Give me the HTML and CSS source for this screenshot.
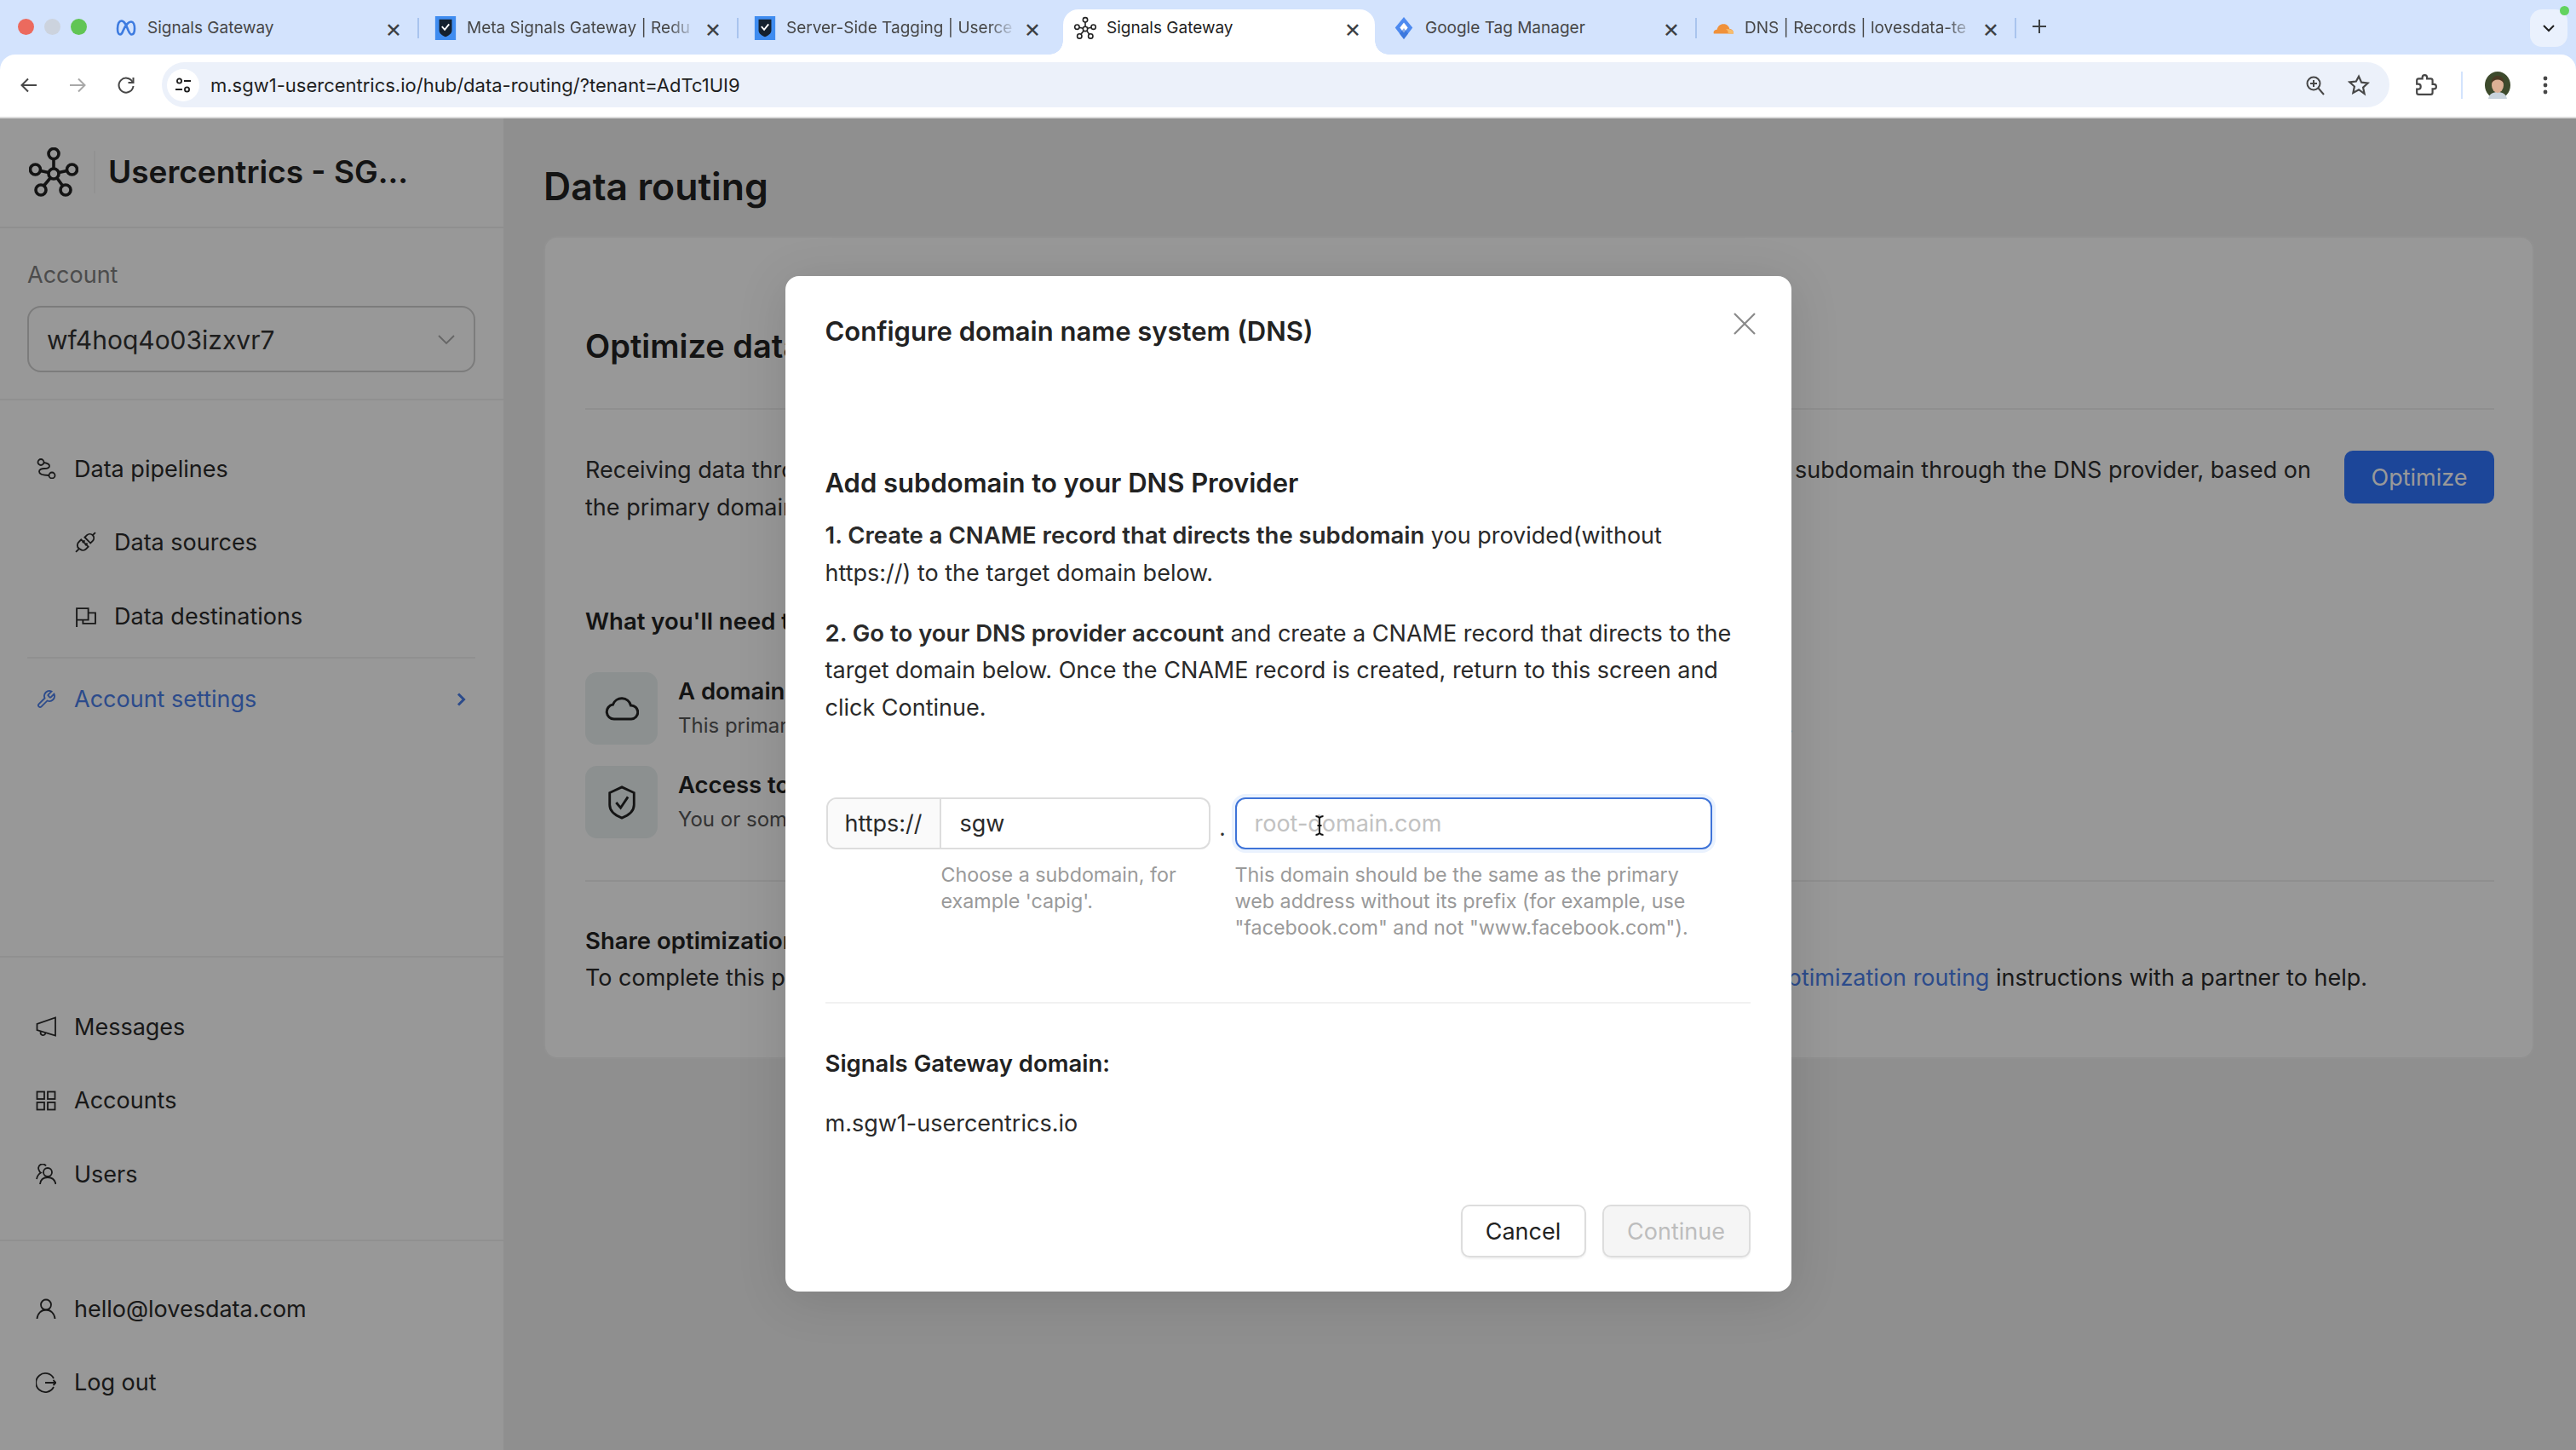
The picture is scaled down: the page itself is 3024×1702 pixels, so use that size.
FILE: index.html
```html
<!DOCTYPE html>
<html lang="en">
<head>
<meta charset="utf-8">
<title>Signals Gateway</title>
<link rel="stylesheet" href="styles.css">
</head>
<body>
<header class="chrome">
  <div class="tabstrip">
    <div class="lights"><i class="light red"></i><i class="light grey"></i><i class="light green"></i></div>
    <div class="tab">
      <svg class="fav" viewBox="0 0 26 26"><path d="M3 13.500C3 8 5 4.500 7.500 4.500c4 0 6 6 8 11 1.500 3.500 2.500 5 4 5 2 0 3.500-2.500 3.500-7s-1.500-8-4-8c-4 0-8 7-9.500 10.500C8.500 19 7.500 20.500 6 20.500c-2 0-3-3-3-7z" fill="none" stroke="#3d7be0" stroke-width="2.600"/></svg>
      <span class="tab-title">Signals Gateway</span><span class="tab-x">×</span>
    </div>
    <div class="tab">
      <svg class="fav" viewBox="0 0 26 30"><rect width="26" height="30" fill="#3f8cf0"/><path d="M5 4h16v14c0 4-4 6.500-8 8-4-1.500-8-4-8-8z" fill="#14202e"/><path d="M8.500 13l3.500 4 5.500-7" fill="none" stroke="#fff" stroke-width="2"/></svg>
      <span class="tab-title fade">Meta Signals Gateway | Redu</span><span class="tab-x">×</span>
    </div>
    <div class="tab">
      <svg class="fav" viewBox="0 0 26 30"><rect width="26" height="30" fill="#3f8cf0"/><path d="M5 4h16v14c0 4-4 6.500-8 8-4-1.500-8-4-8-8z" fill="#14202e"/><path d="M8.500 13l3.500 4 5.500-7" fill="none" stroke="#fff" stroke-width="2"/></svg>
      <span class="tab-title fade">Server-Side Tagging | Userce</span><span class="tab-x">×</span>
    </div>
    <div class="tab active">
      <svg class="fav" viewBox="0 0 58 58"><use href="#hub"/></svg>
      <span class="tab-title">Signals Gateway</span><span class="tab-x">×</span>
    </div>
    <div class="tab">
      <svg class="fav" viewBox="0 0 26 30"><path d="M13 1l11 13.500L13 29 2 14.500z" fill="#4d8af0"/><path d="M13 8l5 6.500-5 6.500-5-6.500z" fill="#fff"/><path d="M13 29l-5.500-7 5.500-7 5.500 7z" fill="#2f69d0" opacity=".55"/></svg>
      <span class="tab-title">Google Tag Manager</span><span class="tab-x">×</span>
    </div>
    <div class="tab">
      <svg class="fav" viewBox="0 0 28 18"><path d="M2 16c-1-3 1-5 4-5 1-5 5-8 10-7 3 .6 5 3 6 6 3 0 5 2 5 6z" fill="#f0913a"/><path d="M20 16c.5-3-1-5-3-6l6 .5c2 .5 4 2.500 4 5.500z" fill="#f8bd6b"/></svg>
      <span class="tab-title fade">DNS | Records | lovesdata-te</span><span class="tab-x">×</span>
    </div>
    <svg class="newtab" viewBox="0 0 18 18"><path d="M9 1v16M1 9h16" stroke="#3c4043" stroke-width="2"/></svg>
    <div class="tab-menu"><svg viewBox="0 0 16 10"><path d="M2 2l6 6 6-6" fill="none" stroke="#1f1f1f" stroke-width="2"/></svg></div>
    <i class="cam-dot"></i>
  </div>
  <div class="toolbar">
    <svg class="tb-icon" viewBox="0 0 24 24"><path d="M21 12H4M11 4.500L3.500 12l7.500 7.500" fill="none" stroke="#474747" stroke-width="2"/></svg>
    <svg class="tb-icon" viewBox="0 0 24 24"><path d="M3 12h17M13 4.500l7.500 7.500-7.500 7.500" fill="none" stroke="#a8a8a8" stroke-width="2"/></svg>
    <svg class="tb-icon" viewBox="0 0 24 24"><path d="M19.500 8A8.500 8.500 0 1 0 20.500 13" fill="none" stroke="#474747" stroke-width="2"/><path d="M20.500 3v6h-6" fill="none" stroke="#474747" stroke-width="2"/></svg>
    <div class="omnibox">
      <div class="site-info"><svg viewBox="0 0 20 20"><circle cx="5.500" cy="5" r="2.600" fill="none" stroke="#1f1f1f" stroke-width="1.800"/><path d="M11 5h8M1 15h8" stroke="#1f1f1f" stroke-width="1.800"/><circle cx="14.500" cy="15" r="2.600" fill="none" stroke="#1f1f1f" stroke-width="1.800"/></svg></div>
      <span class="url">m.sgw1-usercentrics.io/hub/data-routing/?tenant=AdTc1UI9</span>
      <svg class="omni-zoom" viewBox="0 0 24 24"><circle cx="10" cy="10" r="7.500" fill="none" stroke="#474747" stroke-width="2"/><path d="M15.500 15.500L22 23M10 6v8M6 10h8" stroke="#474747" stroke-width="2"/></svg>
      <svg class="omni-star" viewBox="0 0 24 24"><path d="M12 2.500l2.900 6.400 6.900.8-5.100 4.700 1.400 6.900L12 16.800l-6.100 3.500 1.400-6.900-5.100-4.700 6.900-.8z" fill="none" stroke="#474747" stroke-width="2"/></svg>
    </div>
    <svg class="tb-ext" viewBox="0 0 24 24"><path d="M20.500 11H19V7c0-1.100-.9-2-2-2h-4V3.500C13 2.120 11.880 1 10.500 1S8 2.120 8 3.500V5H4c-1.100 0-1.990.9-1.990 2v3.800H3.500c1.490 0 2.700 1.210 2.700 2.700s-1.210 2.700-2.700 2.700H2V20c0 1.100.9 2 2 2h13c1.100 0 2-.9 2-2v-4h1.500c1.380 0 2.500-1.120 2.500-2.500S21.880 11 20.500 11z" fill="none" stroke="#474747" stroke-width="2"/></svg>
    <i class="tb-sep"></i>
    <svg class="avatar" viewBox="0 0 32 32"><ellipse cx="16" cy="16" rx="15" ry="16" fill="#3d4a2c"/><path d="M5 32c1-6 6-8 11-8s10 2 11 8z" fill="#c9d3dc"/><ellipse cx="16" cy="16" rx="7" ry="9" fill="#dcb095"/><path d="M8.500 14c0-7 4-9 7.500-9s7.500 2 7.500 9c-2-3-4-4.500-7.500-4.500S10.500 11 8.500 14z" fill="#4c3a24"/></svg>
    <svg class="kebab" viewBox="0 0 6 24"><circle cx="3" cy="4" r="2.400" fill="#474747"/><circle cx="3" cy="12" r="2.400" fill="#474747"/><circle cx="3" cy="20" r="2.400" fill="#474747"/></svg>
  </div>
</header>

<svg class="sprite" aria-hidden="true"><defs>
  <g id="hub" fill="none" stroke="#222" stroke-width="3.600">
    <circle cx="29" cy="31" r="6"/><circle cx="29" cy="7.500" r="6"/><circle cx="7.500" cy="26" r="6"/><circle cx="50.500" cy="26" r="6"/><circle cx="14" cy="50" r="6"/><circle cx="43" cy="50" r="6"/>
    <path d="M29 13.500V25M13.500 27.500L23 29.500M44.500 27.500L35 29.500M17.500 45L25 36M39.500 45L33 36"/>
  </g>
</defs></svg>

<div class="app">
  <aside class="sidebar">
    <div class="brand">
      <svg class="brand-logo" viewBox="0 0 58 58"><use href="#hub"/></svg>
      <i class="brand-sep"></i>
      <span class="brand-name">Usercentrics - SG...</span>
    </div>
    <div class="account">
      <div class="account-label">Account</div>
      <div class="select"><span>wf4hoq4o03izxvr7</span><svg viewBox="0 0 20 12"><path d="M1 1l9 9 9-9" fill="none" stroke="#aaa" stroke-width="1.800"/></svg></div>
    </div>
    <nav class="nav-main">
      <a class="item"><svg class="ico" viewBox="0 0 24 24"><circle cx="6" cy="4.500" r="3.500"/><circle cx="19" cy="20" r="3.500"/><path d="M9.500 5c4 .5 6.500 1.500 6.500 4s-3 3-6 3c-3.500 0-6 1-6 3.500 0 3 3.500 4.500 11.500 4.500"/></svg>Data pipelines</a>
      <a class="item sub"><svg class="ico" viewBox="0 0 24 24"><path d="M1 23l3.500-3.500M23 1l-3.500 3.500M11 10l-2.500 2.500M14 13l-2.500 2.500"/><path d="M7 9l8 8-2.500 2.500a4.800 4.800 0 0 1-6.500.5L4.500 19a4.800 4.800 0 0 1 0-7.500z"/><path d="M11 6.500L13.500 4a4.800 4.800 0 0 1 6.500 0 4.800 4.800 0 0 1 0 6.500L17.500 13z"/></svg>Data sources</a>
      <a class="item sub"><svg class="ico" viewBox="0 0 24 24"><path d="M2 24V3h13v13H2M15 8h8v12H9v-4"/></svg>Data destinations</a>
      <hr class="rule">
      <a class="item current"><svg class="ico" viewBox="0 0 24 24"><path d="M14.700 6.300a1 1 0 0 0 0 1.400l1.600 1.600a1 1 0 0 0 1.400 0l3.770-3.770a6 6 0 0 1-7.940 7.940l-6.910 6.910a2.120 2.120 0 0 1-3-3l6.910-6.910a6 6 0 0 1 7.940-7.940l-3.760 3.760z"/></svg>Account settings<svg class="chev" viewBox="0 0 11 16"><path d="M2 1.500l6.500 6.500L2 14.500"/></svg></a>
    </nav>
    <nav class="nav-secondary">
      <a class="item"><svg class="ico" viewBox="0 0 24 24"><path d="M23 1.500v21L1.500 16V9zM6 17.500a3 3 0 1 0 5.500 1.800"/></svg>Messages</a>
      <a class="item"><svg class="ico" viewBox="0 0 24 24"><rect x="1.500" y="1.500" width="8.500" height="8.500"/><rect x="14" y="1.500" width="8.500" height="8.500"/><rect x="1.500" y="14" width="8.500" height="8.500"/><rect x="14" y="14" width="8.500" height="8.500"/></svg>Accounts</a>
      <a class="item"><svg class="ico" viewBox="0 0 24 24"><circle cx="14" cy="10" r="5"/><path d="M5 24c.5-5 4-8 9-8s8.500 3 9.500 8M12 2.500A5 5 0 0 0 5.500 1 5 5 0 0 0 3.500 7c.5 1.500 1.500 3 2.500 3.500C3.500 12 1.500 15 1 18"/></svg>Users</a>
    </nav>
    <nav class="nav-user">
      <a class="item"><svg class="ico" viewBox="0 0 24 24"><circle cx="12" cy="7.500" r="6"/><path d="M1.500 24c.5-6.500 5-10.500 10.500-10.500S22 17.500 22.500 24"/></svg>hello@lovesdata.com</a>
      <a class="item"><svg class="ico" viewBox="0 0 24 24"><path d="M21 7A11 11 0 1 0 21 17M11 12h13M20.500 9l3 3-3 3"/></svg>Log out</a>
    </nav>
  </aside>
  <main class="main">
    <h1 class="page-title">Data routing</h1>
    <section class="card">
      <h2 class="card-title">Optimize data</h2>
      <div class="card-intro">
        <div class="intro-text">
          <div class="split"><span>Receiving data through</span><span>subdomain through the DNS provider, based on</span></div>
          <div>the primary domain</div>
        </div>
        <div class="btn-primary">Optimize</div>
      </div>
      <h3 class="need">What you'll need to</h3>
      <div class="need-row">
        <div class="tile"><svg viewBox="0 0 40 30"><path d="M11 27a8.500 8.500 0 0 1-1.500-16.900A11 11 0 0 1 30.500 11 8 8 0 0 1 31 27z" fill="none" stroke="#222" stroke-width="3"/></svg></div>
        <div class="need-body"><div class="need-name">A domain</div><div class="need-sub split"><span>This primary domain</span><span>.</span></div></div>
      </div>
      <div class="need-row">
        <div class="tile"><svg viewBox="0 0 34 42"><path d="M17 2l15 7v15c0 8-7 13-15 16C9 37 2 32 2 24V9z" fill="none" stroke="#222" stroke-width="3"/><path d="M10 21l5.500 6.500L24.500 14" fill="none" stroke="#222" stroke-width="3"/></svg></div>
        <div class="need-body"><div class="need-name">Access to</div><div class="need-sub">You or someone</div></div>
      </div>
      <hr class="card-rule">
      <div class="share">
        <div class="share-title">Share optimization</div>
        <div class="split"><span>To complete this process</span><span><a class="link">optimization routing</a> instructions with a partner to help.</span></div>
      </div>
    </section>
  </main>

  <div class="overlay">
    <div class="modal">
      <svg class="modal-close" viewBox="0 0 26 26"><path d="M1 1l24 24M25 1L1 25" stroke="#8a8a8a" stroke-width="2.200"/></svg>
      <h2 class="modal-title">Configure domain name system (DNS)</h2>
      <h3 class="modal-sub">Add subdomain to your DNS Provider</h3>
      <p class="step"><b>1. Create a CNAME record that directs the subdomain</b> you provided(without<br>https://) to the target domain below.</p>
      <p class="step"><b>2. Go to your DNS provider account</b> and create a CNAME record that directs to the<br>target domain below. Once the CNAME record is created, return to this screen and<br>click Continue.</p>
      <div class="fields">
        <div class="field-left">
          <div class="input-group"><span class="prefix">https://</span><span class="value">sgw</span></div>
          <div class="help help-indent">Choose a subdomain, for<br>example 'capig'.</div>
        </div>
        <span class="dot">.</span>
        <div class="field-right">
          <div class="input-focus">root-domain.com</div>
          <div class="help">This domain should be the same as the primary<br>web address without its prefix (for example, use<br>"facebook.com" and not "www.facebook.com").</div>
          <svg class="cursor" viewBox="0 0 12 24"><path d="M1.500 1c2.500 0 3.500 1 4.500 2 1-1 2-2 4.500-2M6 3v18M1.500 23c2.500 0 3.500-1 4.500-2 1 1 2 2 4.500 2M3.500 12h5" fill="none" stroke="#111" stroke-width="1.800"/></svg>
        </div>
      </div>
      <hr class="modal-rule">
      <div class="gw-label">Signals Gateway domain:</div>
      <div class="gw-value">m.sgw1-usercentrics.io</div>
      <div class="actions">
        <div class="btn-cancel">Cancel</div>
        <div class="btn-disabled">Continue</div>
      </div>
    </div>
  </div>
</div>
</body>
</html>
```
FILE: styles.css
```css
* { box-sizing: border-box; }
html, body { margin: 0; padding: 0; }
body { width: 3024px; height: 1702px; overflow: hidden; font-family: Inter, "Liberation Sans", sans-serif; color: #2a2a2a; background: #fff; }
.sprite { width: 0; height: 0; display: block; }

/* browser chrome */
.chrome { height: 139px; background: #d3e3fd; }
.tabstrip { height: 64px; display: flex; position: relative; padding-left: 117px; }
.lights { position: absolute; left: 21px; top: 22px; display: flex; gap: 12px; }
.light { width: 19px; height: 19px; border-radius: 50%; }
.red { background: #ec6a5e; }
.grey { background: #ccd3de; }
.green { background: #61c554; }
.tab { flex: 0 0 375px; min-width: 0; height: 53px; margin-top: 11px; padding: 0 17px 10px 18px; display: flex; align-items: center; position: relative; font-size: 19px; color: #474747; }
.tab::after { content: ""; position: absolute; right: 0; top: 10px; height: 24px; width: 2px; background: #a9c4ee; }
.tab:nth-child(4)::after { display: none; }
.tab.active { flex-basis: 366px; margin-left: 6px; margin-right: 3px; padding-left: 13px; padding-right: 13px; background: #fff; border-radius: 18px 18px 0 0; color: #1f1f1f; }
.tab.active::before, .tab.active::after { content: ""; display: block; position: absolute; top: auto; bottom: 0; width: 16px; height: 16px; }
.tab.active::before { left: -16px; right: auto; background: radial-gradient(circle at 0 0, transparent 15.500px, #fff 16px); }
.tab.active::after { right: -16px; background: radial-gradient(circle at 100% 0, transparent 15.500px, #fff 16px); }
.fav { width: 26px; height: 28px; flex: none; margin-right: 12px; }
.tab-title { flex: 1; min-width: 0; white-space: nowrap; }
.fade { -webkit-mask-image: linear-gradient(to right, #000 88%, transparent 100%); mask-image: linear-gradient(to right, #000 88%, transparent 100%); }
.tab-x { flex: none; width: 26px; margin-left: 6px; text-align: center; font-size: 30px; line-height: 30px; color: #3c4043; }
.newtab { width: 18px; height: 18px; position: relative; margin: 22px 0 0 18px; }
.tab-menu { position: absolute; left: 2970px; top: 11px; width: 44px; height: 44px; border-radius: 14px; background: #eaf1fd; display: flex; align-items: center; justify-content: center; }
.tab-menu svg { width: 16px; height: 10px; }
.cam-dot { position: absolute; left: 3005px; top: 7px; width: 11px; height: 11px; border-radius: 50%; background: #62d35f; }

.toolbar { height: 75px; background: #fff; border-radius: 18px 18px 0 0; border-bottom: 2px solid #dcdcdc; display: flex; align-items: center; padding: 0 30px 2px 22px; }
.tb-icon { width: 24px; height: 24px; margin-right: 33px; flex: none; }
.tb-icon:nth-child(3) { margin-right: 30px; }
.omnibox { flex: 0 0 2615px; height: 53px; border-radius: 27px; background: #ecf1fa; display: flex; align-items: center; padding: 0 23px 0 6px; }
.site-info { width: 38px; height: 38px; border-radius: 50%; background: #fff; display: flex; align-items: center; justify-content: center; flex: none; }
.site-info svg { width: 20px; height: 20px; }
.url { margin-left: 13px; font-size: 22px; color: #1f1f1f; flex: 1; white-space: nowrap; }
.omni-zoom { width: 24px; height: 24px; margin-right: 26px; }
.omni-star { width: 26px; height: 26px; }
.tb-ext { width: 26px; height: 26px; margin-left: 30px; flex: none; }
.tb-sep { width: 2px; height: 32px; background: #d3e3fd; margin-left: 28px; flex: none; }
.avatar { width: 32px; height: 32px; margin-left: 25px; flex: none; }
.kebab { width: 6px; height: 24px; margin-left: 37px; flex: none; }

/* app */
.app { position: relative; height: 1563px; display: flex; background: #eee; }
.sidebar { flex: 0 0 591px; background: #fdfdfd; display: flex; flex-direction: column; }
.brand { height: 129px; border-bottom: 2px solid #eee; display: flex; align-items: center; padding: 0 0 2px 34px; }
.brand-logo { width: 58px; height: 58px; flex: none; }
.brand-sep { width: 2px; height: 50px; background: #f3f3f3; margin-left: 18px; flex: none; }
.brand-name { margin-left: 15px; font-size: 37px; font-weight: 600; color: #222; white-space: nowrap; }
.account { height: 202px; border-bottom: 2px solid #f0f0f0; padding: 36px 33px 0 32px; }
.account-label { font-size: 27px; line-height: 38px; color: #7f7f7f; }
.select { margin-top: 17px; height: 78px; border: 2px solid #cfcfcf; border-radius: 16px; display: flex; align-items: center; justify-content: space-between; padding: 2px 22px 0 21px; font-size: 30px; color: #333; }
.select svg { width: 20px; height: 12px; }
.nav-main { padding: 37px 33px 0 32px; height: 654px; border-bottom: 2px solid #f0f0f0; }
.item { display: flex; align-items: center; height: 86.500px; font-size: 27px; color: #2a2a2a; white-space: nowrap; padding-left: 10px; }
.ico { width: 24px; height: 24px; margin-right: 21px; flex: none; fill: none; stroke: #2a2a2a; stroke-width: 1.800; }
.item.sub { padding-left: 56px; }
.item.sub .ico { width: 25px; height: 25px; margin-right: 21px; }
.rule { border: 0; border-top: 2px solid #f0f0f0; margin: 4px 0 5px; }
.current { color: #4a7de8; }
.current .ico { stroke: #4a7de8; }
.chev { width: 11px; height: 16px; margin-left: auto; margin-right: 11px; fill: none; stroke: #4a7de8; stroke-width: 3; }
.nav-secondary { padding: 38px 33px 0 32px; height: 333px; border-bottom: 2px solid #f0f0f0; }
.nav-user { padding: 36px 33px 0 32px; }

.main { flex: 1; min-width: 0; padding: 50px 49px 0 47px; }
.page-title { margin: 0 0 28px; font-size: 44.500px; line-height: 60px; font-weight: 600; color: #222; }
.card { height: 966px; border-radius: 16px; background: #fdfdfd; border: 2px solid #f2f2f2; padding: 0 45px 0 47px; font-size: 27px; }
.card-title { margin: 0; padding: 98px 0 44px; line-height: 58px; font-size: 38px; font-weight: 600; color: #222; border-bottom: 2px solid #eee; }
.card-intro { display: flex; margin-top: 49px; gap: 39px; line-height: 43.500px; color: #2f2f2f; }
.intro-text { flex: 1; min-width: 0; }
.split { display: flex; justify-content: space-between; white-space: nowrap; }
.btn-primary { flex: none; width: 176px; height: 62px; margin-top: -1px; padding-top: 2px; border-radius: 10px; background: #2f75ff; color: #fff; display: flex; align-items: center; justify-content: center; font-size: 27px; }
.need { margin: 90px 0 38px; font-size: 27.500px; line-height: 44px; font-weight: 600; color: #222; }
.need-row { display: flex; gap: 24px; margin-bottom: 25px; }
.tile { flex: none; width: 85px; height: 85px; border-radius: 14px; background: #e9f0f0; display: flex; align-items: center; justify-content: center; }
.tile svg { width: 40px; height: 40px; }
.need-body { width: 1309px; }
.need-name { font-size: 27.500px; line-height: 44px; font-weight: 600; color: #222; }
.need-sub { font-size: 24px; line-height: 36px; margin-top: 1px; color: #555; }
.card-rule { border: 0; border-top: 2px solid #eee; margin: 49px 0 0; }
.share { padding-top: 47px; line-height: 44px; width: 2092px; }
.share-title { font-weight: 600; font-size: 27.500px; color: #222; }
.link { color: #4a7de8; }

/* modal */
.overlay { position: absolute; inset: 0; background: rgba(0, 0, 0, 0.4); display: flex; justify-content: center; align-items: flex-start; }
.modal { position: relative; margin-top: 185px; width: 1181px; height: 1192px; background: #fff; border-radius: 16px; box-shadow: 0 8px 60px rgba(0, 0, 0, 0.12); padding: 41px 48px 0 47px; color: #2a2a2a; font-size: 27px; }
.modal-close { position: absolute; right: 42px; top: 43px; width: 26px; height: 26px; }
.modal-title { margin: 0; font-size: 31px; line-height: 48px; font-weight: 600; color: #222; }
.modal-sub { margin: 131px 0 17px; font-size: 31px; line-height: 46px; font-weight: 600; color: #222; }
.step { margin: 0 0 27.500px; line-height: 43.500px; white-space: nowrap; }
.step b { font-weight: 600; font-size: 27.500px; }
.fields { display: flex; margin-top: 84px; margin-left: 1px; }
.field-left { flex: 0 0 451px; }
.input-group { height: 61px; border: 2px solid #ddd; border-radius: 12px; display: flex; align-items: center; overflow: hidden; }
.prefix { width: 133px; height: 100%; background: #fafafa; border-right: 2px solid #ddd; display: flex; align-items: center; justify-content: center; }
.value { padding-left: 22px; }
.help { margin-top: 14px; font-size: 23.300px; line-height: 31px; color: #9a9a9a; white-space: nowrap; }
.help-indent { margin-left: 135px; }
.dot { flex: 0 0 29px; text-align: center; line-height: 72px; height: 61px; font-size: 26px; color: #333; }
.field-right { flex: 0 0 560px; position: relative; }
.input-focus { height: 61px; border: 2px solid #3f74d8; border-radius: 12px; box-shadow: 0 0 0 4px #eaf2fe; display: flex; align-items: center; padding-left: 21px; color: #c2c2c2; }
.cursor { position: absolute; left: 93px; top: 21px; width: 12px; height: 24px; }
.modal-rule { border: 0; border-top: 2px solid #f1f1f1; margin: 72px 0 0; }
.gw-label { margin-top: 48px; line-height: 44px; font-weight: 600; font-size: 27.500px; color: #222; }
.gw-value { margin-top: 27px; line-height: 44px; }
.actions { display: flex; justify-content: flex-end; gap: 19px; margin-top: 73px; }
.btn-cancel, .btn-disabled { height: 62px; border-radius: 10px; display: flex; align-items: center; justify-content: center; box-shadow: 0 2px 2px rgba(0, 0, 0, 0.05); }
.btn-cancel { width: 147px; border: 2px solid #ddd; background: #fff; color: #222; }
.btn-disabled { width: 174px; border: 2px solid #ddd; background: #f5f5f5; color: #bdbdbd; }
```
